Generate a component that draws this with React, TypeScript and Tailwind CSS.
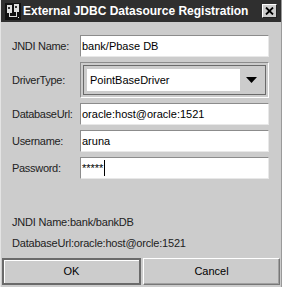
import React from 'react';

const font = { fontFamily: '"Liberation Sans", Arial, sans-serif' };

const TitleIcon = () => (
  <svg width="16" height="17" viewBox="0 0 16 17">
    <rect x="0" y="0" width="16" height="17" fill="#111" />
    <rect x="2" y="2" width="5" height="8" fill="#ddd" />
    <rect x="3" y="4" width="2" height="2" fill="#333" />
    <rect x="9" y="1" width="5" height="8" fill="#ddd" />
    <rect x="10" y="3" width="2" height="2" fill="#333" />
    <rect x="4" y="10" width="1" height="3" fill="#ddd" />
    <rect x="4" y="13" width="8" height="1" fill="#ddd" />
    <rect x="11" y="9" width="1" height="4" fill="#ddd" />
    <rect x="13" y="14" width="1" height="1" fill="#ddd" />
  </svg>
);

const Field = ({ label, value, caret }: { label: string; value: string; caret?: boolean }) => (
  <div className="flex items-center h-[22px]">
    <span className="w-[68px] text-[11px] tracking-[-0.3px] text-[#222] whitespace-nowrap">{label}</span>
    <div className="flex items-center w-[189px] h-full bg-white border border-t-[#8c8c8c] border-l-[#8c8c8c] border-b-[#e8e8e8] border-r-[#e8e8e8] pl-[1px] text-[11px] text-black">
      <span>{value}</span>
      {caret && <span className="w-[1px] h-[16px] bg-black ml-[1px]" />}
    </div>
  </div>
);

export default function App() {
  return (
    <div style={font} className="w-[282px] h-[287px] bg-[#cccccc] flex flex-col border-l border-l-[#e4e4e4] border-r border-r-[#9a9a9a]">
      <div className="flex items-center h-[22px] bg-[#2f2f2f] pl-[4px] pr-[4px]">
        <TitleIcon />
        <span className="ml-[2px] text-white text-[12px] font-bold whitespace-nowrap">External JDBC Datasource Registration</span>
        <div className="ml-auto flex items-center justify-center w-[15px] h-[14px] bg-[#cccccc] border border-t-white border-l-white border-b-[#222] border-r-[#222]">
          <svg width="9" height="8" viewBox="0 0 9 8">
            <path d="M1 0.5 L8 7.5 M8 0.5 L1 7.5" stroke="#000" strokeWidth="1.8" />
          </svg>
        </div>
      </div>

      <div className="flex flex-col gap-[5px] pl-[11px] pt-[13px]">
        <Field label="JNDI Name:" value="bank/Pbase DB" />
        <div className="flex items-center h-[36px]">
          <span className="w-[68px] text-[11px] tracking-[-0.3px] text-[#222]">DriverType:</span>
          <div className="w-[189px] h-full border border-t-[#8c8c8c] border-l-[#8c8c8c] border-b-white border-r-white p-[2px]">
            <div className="flex h-full border border-[#6a6a6a] p-[3px] bg-[#cccccc]">
              <div className="flex-1 flex items-center bg-white pl-[3px] text-[11px] text-black">PointBaseDriver</div>
              <div className="w-[22px] flex items-center justify-center">
                <svg width="11" height="6" viewBox="0 0 11 6">
                  <path d="M0 0 H11 L5.5 6 Z" fill="#000" />
                </svg>
              </div>
            </div>
          </div>
        </div>
        <Field label="DatabaseUrl:" value="oracle:host@oracle:1521" />
        <Field label="Username:" value="aruna" />
        <Field label="Password:" value="*****" caret />
      </div>

      <div className="flex flex-col gap-[4px] pl-[11px] mt-[35px] text-[11px] tracking-[-0.2px] text-[#222]">
        <span>JNDI Name:bank/bankDB</span>
        <span>DatabaseUrl:oracle:host@orcle:1521</span>
      </div>

      <div className="flex gap-[2px] px-[1px] mt-auto mb-[2px] h-[27px]">
        <button className="flex-1 flex items-center justify-center border-2 border-[#6a6a6a] shadow-[inset_1px_1px_0_#ffffff] text-[11px] text-black">OK</button>
        <button className="flex-1 flex items-center justify-center border border-t-white border-l-white border-b-[#777] border-r-[#777] shadow-[inset_-1px_-1px_0_#a0a0a0] text-[11px] text-black">Cancel</button>
      </div>
    </div>
  );
}
